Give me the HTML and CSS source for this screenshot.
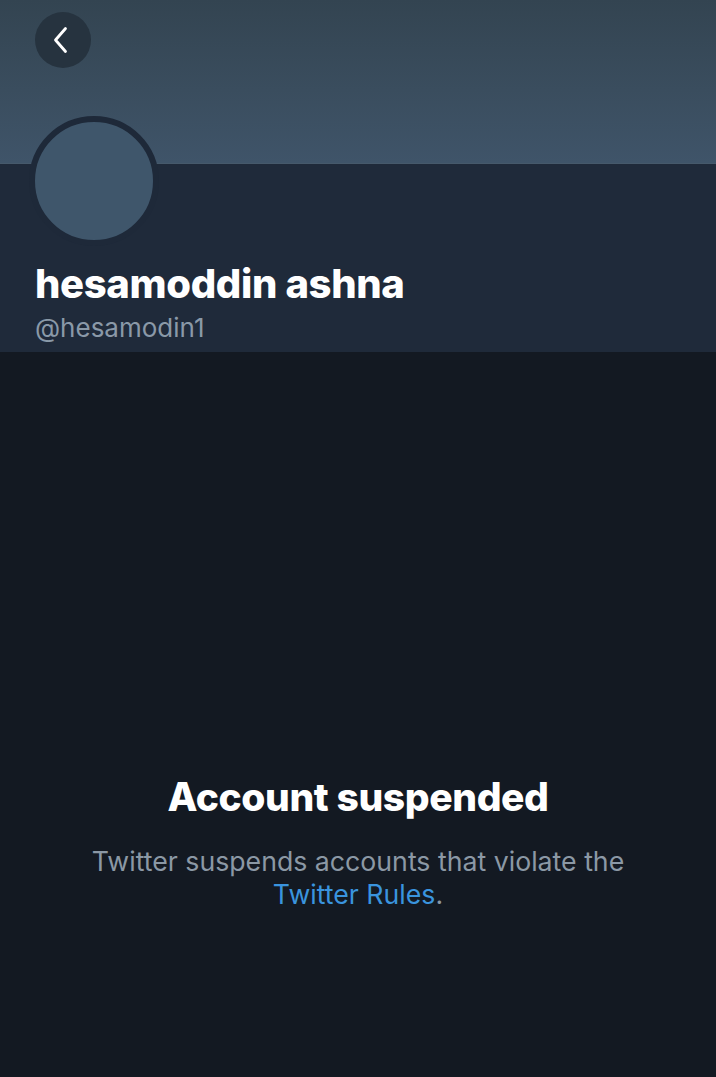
FILE: index.html
```html
<!DOCTYPE html>
<html lang="en">
<head>
<meta charset="utf-8">
<title>hesamoddin ashna</title>
<link rel="stylesheet" href="styles.css">
</head>
<body>
<div class="page">
  <header class="banner">
    <button class="back" aria-label="Back">
      <svg width="20" height="28" viewBox="0 0 20 28"><path d="M14.5 2.5 L4.5 14 L14.5 25.5" fill="none" stroke="#ffffff" stroke-width="2.8" stroke-linecap="round" stroke-linejoin="round"/></svg>
    </button>
  </header>
  <section class="profile">
    <div class="avatar"></div>
    <h1 class="name">hesamoddin ashna</h1>
    <div class="handle">@hesamodin1</div>
  </section>
  <main class="content">
    <h2 class="title">Account suspended</h2>
    <p class="desc">Twitter suspends accounts that violate the <a class="link" href="#">Twitter Rules</a>.</p>
  </main>
</div>
</body>
</html>
```

FILE: styles.css
```css
* { box-sizing: border-box; }
html, body { margin: 0; padding: 0; }
body {
  background: #131922;
  font-family: Inter, "Liberation Sans", sans-serif;
  width: 716px;
  height: 1077px;
  overflow: hidden;
}
.page { display: flex; flex-direction: column; height: 1077px; }
.banner {
  height: 164px;
  background: linear-gradient(to bottom, #334451 0%, #3a4d5e 55%, #3f5469 100%);
  padding: 12px 0 0 35px;
  border-bottom: 1px solid #46596b;
}
.back {
  width: 56px; height: 56px;
  border-radius: 50%;
  border: none;
  background: #26333f;
  display: flex; align-items: center; justify-content: center;
  padding: 0 4px 0 0;
}
.profile {
  background: #1f2a3a;
  height: 188px;
  padding: 0 35px;
  position: relative;
}
.avatar {
  position: absolute;
  left: 29px; top: -48px;
  width: 130px; height: 130px;
  border-radius: 50%;
  background: #3f566b;
  border: 6px solid #1e2939;
}
.name {
  margin: 0;
  padding-top: 96px;
  color: #ffffff;
  font-size: 40px;
  font-weight: 800;
  line-height: 48px;
  letter-spacing: -0.35px;
}
.handle {
  color: #8a99a8;
  font-size: 26px;
  line-height: 34px;
  margin-top: 3px;
}
.content {
  flex: 1;
  display: flex; flex-direction: column; align-items: center;
  padding-top: 420px;
  text-align: center;
}
.title {
  margin: 0;
  color: #ffffff;
  font-size: 39px;
  font-weight: 800;
  line-height: 50px;
  letter-spacing: -0.4px;
}
.desc {
  margin: 23px 0 0;
  width: 600px;
  color: #8b98a5;
  font-size: 26.7px;
  line-height: 33px;
}
.link { color: #3a94de; text-decoration: none; }
```
